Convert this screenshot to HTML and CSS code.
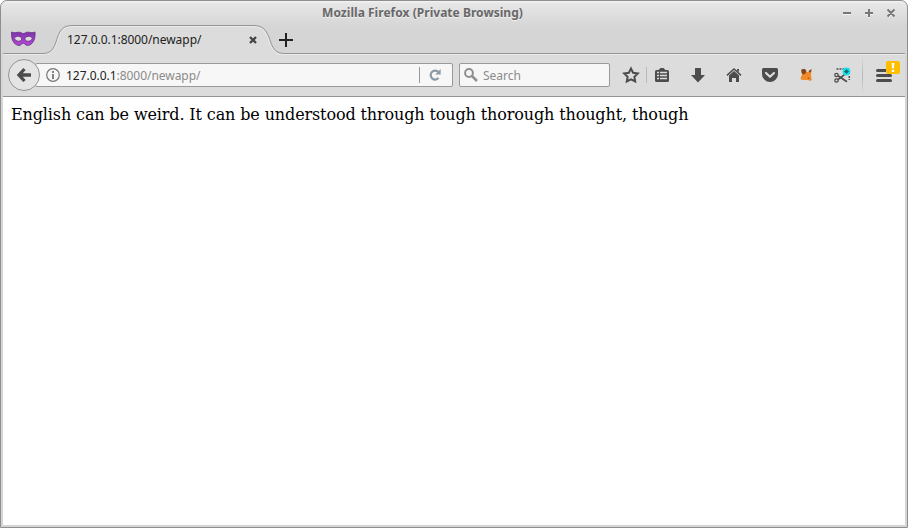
FILE: index.html
```html
<!DOCTYPE html>
<html lang="en">
<head>
<meta charset="utf-8">
<title>Mozilla Firefox (Private Browsing)</title>
<link rel="stylesheet" href="styles.css">
</head>
<body>
<div class="window">
  <header class="titlebar">
    <span class="title">Mozilla Firefox (Private Browsing)</span>
    <svg class="controls" width="56" height="12" viewBox="0 0 56 12"><g fill="none" stroke="#fff" stroke-opacity=".65" stroke-width="2" transform="translate(0 1)"><path d="M1 6h8M23 6h8M27 2v8M46 2.500l6.500 6.500m0-6.500L46 9"/></g><g fill="none" stroke="#777" stroke-width="2"><path d="M1 6h8M23 6h8M27 2v8M45.500 2.500l7 7m0-7l-7 7"/></g></svg>
  </header>
  <div class="tabs">
    <svg class="mask" width="25" height="16" viewBox="0 0 25 16"><defs><linearGradient id="purple" x2="0" y2="1"><stop stop-color="#7d35a8"/><stop offset="1" stop-color="#b548d8"/></linearGradient></defs><path d="M.6 1C3 2.500 5.500 1.200 8 1.200c2 0 2.800 1.300 4.300 1.300s2.300-1.300 4.300-1.300c2.500 0 5 1.300 7.400-.2.300 5-.5 8.300-2.500 10.700-1.500 1.900-3.300 2.700-5 2.700-2.200 0-2.800-2.200-4.200-2.200s-2 2.200-4.200 2.200c-1.700 0-3.500-.8-5-2.700C1.100 9.300.3 6 .6 1z" fill="url(#purple)" stroke="#68308a" stroke-width=".9"/><path d="M3.200 7.300C5.500 4.300 9.600 4.800 11 8 9 11.300 5.200 11 3.200 7.300zM21.400 7.300C19.100 4.300 15 4.800 13.600 8c2 3.300 5.800 3 7.800-.7z" fill="#dcdcdc" stroke="#61277f" stroke-width=".8"/></svg>
    <div class="tab">
      <svg class="tab-shape" width="902" height="30" viewBox="0 0 902 30"><path d="M0 30V28.500H40C59 28.500 48 .5 69 .5H251C272 .5 262 28.500 281 28.500H902V30z" fill="#dcdcdc"/><path d="M0 29.500H40C60 29.500 49 1.500 70 1.500H250C271 1.500 261 29.500 280 29.500H902" fill="none" stroke="#eaeaea"/><path d="M0 28.500H40C59 28.500 48 .5 69 .5H251C272 .5 262 28.500 281 28.500H902" fill="none" stroke="#949698"/></svg>
      <span class="tab-label">127.0.0.1:8000/newapp/</span>
      <svg class="tab-close" width="8" height="8" viewBox="0 0 8 8"><path d="M1 1l6 6m0-6L1 7" stroke="#444" stroke-width="2.300"/></svg>
    </div>
    <svg class="new-tab" width="14" height="14" viewBox="0 0 14 14"><path d="M7 0v14M0 7h14" stroke="#222" stroke-width="2"/></svg>
  </div>
  <nav class="toolbar">
    <div class="back"><svg width="16" height="16" viewBox="0 0 16 16"><path d="M8.500 2L3 8l5.500 6M3.500 8H15" fill="none" stroke="#4c4c4c" stroke-width="3.300"/></svg></div>
    <div class="address">
      <svg class="info" width="14" height="14" viewBox="0 0 14 14"><circle cx="7" cy="7" r="6.300" fill="none" stroke="#777" stroke-width="1.200"/><path d="M7 3v2M7 6v5" stroke="#777" stroke-width="1.800"/></svg>
      <span class="url">127.0.0.1<span class="dim">:8000/newapp/</span></span>
      <span class="address-line"></span>
      <svg class="reload" width="12" height="12" viewBox="0 0 12 12"><path d="M9.500 9.100A4.500 4.500 0 1 1 9.300 2.800" fill="none" stroke="#8c9aa5" stroke-width="2.200"/><path d="M11.700 0v5.600H6.200z" fill="#8c9aa5"/></svg>
    </div>
    <div class="search">
      <svg width="14" height="14" viewBox="0 0 14 14"><circle cx="5" cy="5" r="3.900" fill="none" stroke="#8f8f8f" stroke-width="2"/><path d="M8 8l5 5" stroke="#8f8f8f" stroke-width="2.500"/></svg>
      <span>Search</span>
    </div>
    <svg class="icons" width="290" height="42" viewBox="614 54 290 42">
      <path d="M631 68.600l2.100 4.200 4.700.7-3.400 3.300.8 4.700-4.200-2.200-4.200 2.200.8-4.700-3.400-3.300 4.700-.7z" fill="none" stroke="#4c4c4c" stroke-width="2"/>
      <path d="M646.500 67v16" stroke="#bbb"/>
      <path d="M656.500 70H658.500l2-2h3l2 2h2q1.500 0 1.500 1.500v9q0 1.500-1.500 1.500h-11q-1.500 0-1.500-1.500v-9q0-1.500 1.500-1.500z" fill="#4c4c4c"/>
      <path d="M657 72.500h2m1 0h7M657 75.500h2m1 0h7M657 78.500h2m1 0h7" stroke="#dcdcdc" stroke-width="1.500"/>
      <path d="M695.500 68h5q.5 0 .5.500V75h4l-7 7.500L691 75h4v-6.500q0-.5.500-.5z" fill="#4c4c4c"/>
      <path d="M727 75.300l7-6.300 7 6.300" fill="none" stroke="#4c4c4c" stroke-width="1.600"/><path d="M729 75.500l5-4.500 5 4.500v6.500h-3v-4h-4v4h-3zM737 69h2v3l-2-1.500z" fill="#4c4c4c"/>
      <path d="M763.500 68h13q1.500 0 1.500 1.500v4.500q0 3.500-2.500 5.800-2.300 2.200-5.500 2.200t-5.500-2.200Q762 77.500 762 74v-4.500q0-1.500 1.500-1.500z" fill="#4c4c4c"/><path d="M766 73l4 3.800 4-3.800" fill="none" stroke="#dcdcdc" stroke-width="2.200" stroke-linecap="round" stroke-linejoin="round"/>
      <path d="M801.500 70h3l2 2h2l3-2.500-.5 5.500.7 4.500-1 1.500-3.200-1-6.300-.2-.7-1.800 1.500-3z" fill="#f08a2a"/><path d="M801.300 69.500l3-.7 2.200 1.700-1 3-2.500 1-1.500-2zM811.500 69l-3 2 1 1.500 1.500-.5zM807.500 77.500l2 .5-1 1z" fill="#82451e"/>
      <g fill="none" stroke="#4c4c4c" stroke-width="1.700"><circle cx="836.500" cy="75" r="1.700" stroke-width="1.300"/><circle cx="836.500" cy="80.500" r="1.700" stroke-width="1.300"/><path d="M838 75.700l9 6M838 79.700l6.500-5"/><path d="M836.500 69h8M849.300 76v4" stroke-width="1.500" stroke-dasharray="2 1"/></g>
      <circle cx="846.500" cy="71.500" r="3.900" fill="#12e4ef"/><path d="M846.500 69v5m-2.500-2.500h5m-4.200-1.700l3.400 3.400m0-3.400l-3.400 3.400" stroke="#145e66" stroke-width=".8"/>
      <path d="M862.500 56v38" stroke="url(#divider)"/><defs><linearGradient id="divider" gradientUnits="userSpaceOnUse" x1="0" x2="0" y1="56" y2="94"><stop stop-color="#dcdcdc"/><stop offset=".5" stop-color="#b5b5b5"/><stop offset="1" stop-color="#dcdcdc"/></linearGradient></defs>
      <path d="M877.500 70.500h13M877.500 75.500h13M877.500 80.500h13" stroke="#4c4c4c" stroke-width="3" stroke-linecap="round"/>
      <rect x="886" y="61" width="14" height="13" rx="2" fill="#ffbf00"/><path d="M891.700 63h2.600l-.4 5.500h-1.800zM891.800 70h2.400v2h-2.400z" fill="#fff"/>
    </svg>
  </nav>
  <main class="page">English can be weird. It can be understood through tough thorough thought, though</main>
</div>
</body>
</html>
```

FILE: styles.css
```css
* { box-sizing: border-box; }
body { margin: 0; background: #fff; }
svg { display: block; flex: none; }
.window {
  width: 908px;
  height: 528px;
  display: flex;
  flex-direction: column;
  padding: 0 2px 2px;
  border: 1px solid #8f8f8f;
  border-radius: 7px 7px 0 0;
  background: linear-gradient(#f5f5f5 0, #e7e7e7 2px, #d5d5d5 26px, #d5d5d5 100%);
  font-family: "Noto Sans", sans-serif;
  font-size: 12px;
}
.titlebar {
  flex: none;
  height: 24px;
  display: grid;
  grid-template-columns: 839px 56px;
  align-items: center;
}
.title {
  text-align: center;
  color: #686868;
  font-weight: bold;
  line-height: 24px;
  letter-spacing: 0.03px;
  text-shadow: 0 1px #f0f0f0;
}
.tabs { flex: none; height: 29px; display: flex; align-items: flex-start; }
.mask { margin: 6px 0 0 8px; }
.tab {
  width: 235px;
  height: 29px;
  margin-left: 7px;
  display: flex;
  align-items: center;
  justify-content: space-between;
  padding: 0 18px 0 24px;
  position: relative;
  color: #222;
}
.tab-shape { position: absolute; left: -40px; top: 0; }
.tab-label, .tab-close, .new-tab { position: relative; }
.tab-label { padding-bottom: 1px; letter-spacing: -0.04px; }
.tab-close { margin: 1px 3px 0 0; }
.new-tab { margin: 8px 0 0 1px; }
.toolbar {
  flex: none;
  height: 43px;
  display: flex;
  align-items: center;
  padding-left: 5px;
  background: #dcdcdc;
  border-bottom: 1px solid #949494;
}
.back {
  width: 32px;
  height: 32px;
  display: grid;
  place-items: center;
  border: 1px solid #949494;
  border-radius: 50%;
  background: #e4e4e4;
  z-index: 1;
}
.address, .search {
  height: 24px;
  display: flex;
  align-items: center;
  border: 1px solid #999;
  background: #f7f7f7;
  border-radius: 2px;
}
.address { width: 418px; margin-left: -5px; padding: 0 11px 0 10px; }
.url { flex: 1; margin-left: 6px; color: #222; letter-spacing: -0.04px; }
.dim, .search { color: #8b8b8b; }
.address-line { width: 1px; height: 16px; margin-right: 9px; background: #999; }
.search { width: 151px; margin-left: 6px; padding-left: 4px; gap: 5px; }
.icons { margin-left: 4px; }
.page {
  flex: 1;
  padding: 8px;
  background: #fff;
  color: #000;
  font: 16px/19px "DejaVu Serif", serif;
  letter-spacing: -0.124px;
}
```
